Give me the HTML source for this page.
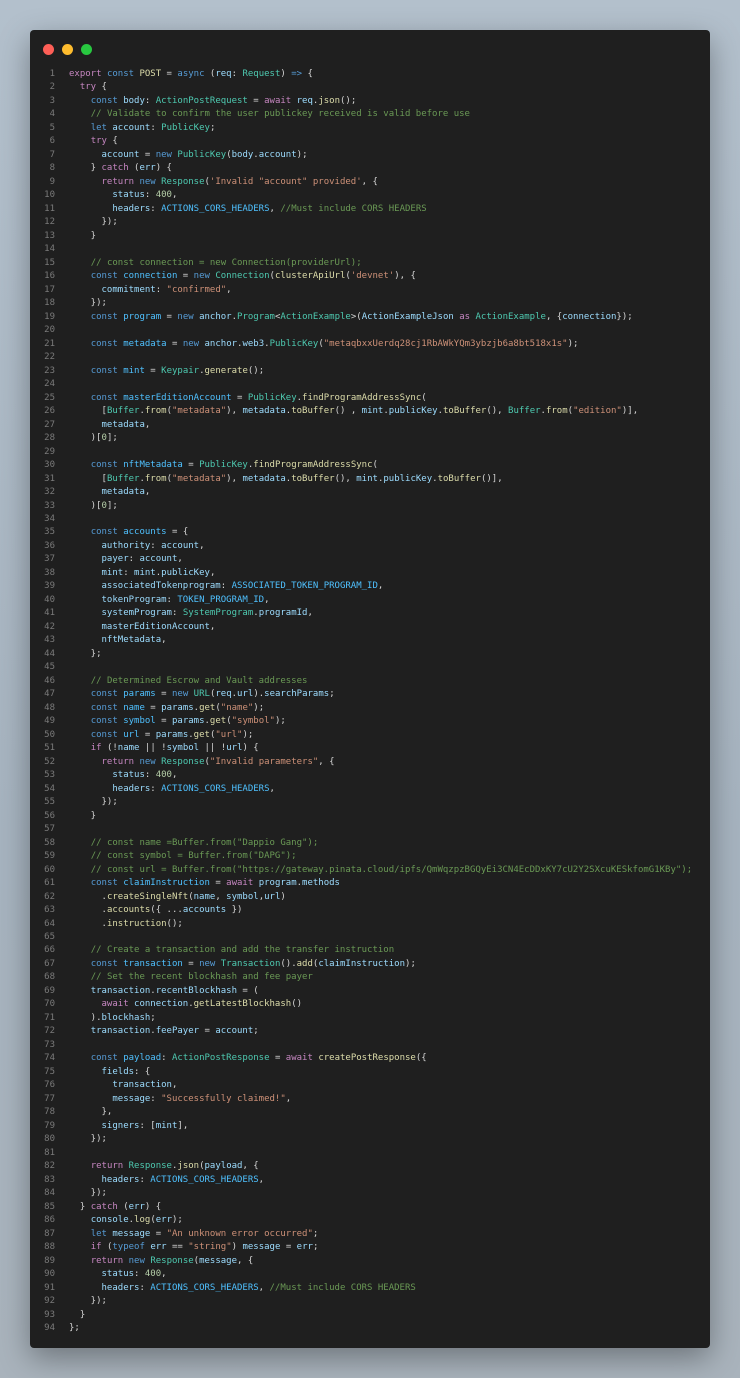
<!DOCTYPE html>
<html><head><meta charset="utf-8">
<style>
html,body{margin:0;padding:0;}
body{width:740px;height:1378px;background:linear-gradient(180deg,#b3c0cc 0%,#a6b3bf 60%,#a9b3bc 100%);position:relative;overflow:hidden;font-family:"Liberation Mono",monospace;}
.win{position:absolute;left:30px;top:30px;width:680px;height:1318px;background:#1f1f1f;border-radius:4px;box-shadow:0 10px 30px rgba(0,0,0,0.35);}
.dot{position:absolute;top:44px;width:11px;height:11px;border-radius:50%;}
.code{position:absolute;left:0;top:68px;font-size:9px;line-height:13.48px;color:#d4d4d4;white-space:pre;margin:0;}
.ln{display:inline-block;width:55px;text-align:right;color:#7a7a7a;margin-right:14px;}
.k{color:#c586c0}.b{color:#569cd6}.f{color:#dcdcaa}.t{color:#4ec9b0}.v{color:#9cdcfe}.s{color:#ce9178}.c{color:#6a9955}.n{color:#b5cea8}.u{color:#4fc1ff}
</style></head><body>
<div class="win"></div>
<div class="dot" style="left:43px;background:#fe5f57"></div>
<div class="dot" style="left:62px;background:#febc2e"></div>
<div class="dot" style="left:81px;background:#28c840"></div>
<pre class="code"><span class="ln">1</span><span class="k">export</span> <span class="b">const</span> <span class="f">POST</span> = <span class="b">async</span> (<span class="v">req</span>: <span class="t">Request</span>) <span class="b">=&gt;</span> {
<span class="ln">2</span>  <span class="k">try</span> {
<span class="ln">3</span>    <span class="b">const</span> <span class="v">body</span>: <span class="t">ActionPostRequest</span> = <span class="k">await</span> <span class="v">req</span>.<span class="f">json</span>();
<span class="ln">4</span>    <span class="c">// Validate to confirm the user publickey received is valid before use</span>
<span class="ln">5</span>    <span class="b">let</span> <span class="v">account</span>: <span class="t">PublicKey</span>;
<span class="ln">6</span>    <span class="k">try</span> {
<span class="ln">7</span>      <span class="v">account</span> = <span class="b">new</span> <span class="t">PublicKey</span>(<span class="v">body</span>.<span class="v">account</span>);
<span class="ln">8</span>    } <span class="k">catch</span> (<span class="v">err</span>) {
<span class="ln">9</span>      <span class="k">return</span> <span class="b">new</span> <span class="t">Response</span>(<span class="s">'Invalid "account" provided'</span>, {
<span class="ln">10</span>        <span class="v">status</span>: <span class="n">400</span>,
<span class="ln">11</span>        <span class="v">headers</span>: <span class="u">ACTIONS_CORS_HEADERS</span>, <span class="c">//Must include CORS HEADERS</span>
<span class="ln">12</span>      });
<span class="ln">13</span>    }
<span class="ln">14</span>
<span class="ln">15</span>    <span class="c">// const connection = new Connection(providerUrl);</span>
<span class="ln">16</span>    <span class="b">const</span> <span class="u">connection</span> = <span class="b">new</span> <span class="t">Connection</span>(<span class="f">clusterApiUrl</span>(<span class="s">'devnet'</span>), {
<span class="ln">17</span>      <span class="v">commitment</span>: <span class="s">"confirmed"</span>,
<span class="ln">18</span>    });
<span class="ln">19</span>    <span class="b">const</span> <span class="u">program</span> = <span class="b">new</span> <span class="v">anchor</span>.<span class="t">Program</span>&lt;<span class="t">ActionExample</span>&gt;(<span class="v">ActionExampleJson</span> <span class="k">as</span> <span class="t">ActionExample</span>, {<span class="v">connection</span>});
<span class="ln">20</span>
<span class="ln">21</span>    <span class="b">const</span> <span class="u">metadata</span> = <span class="b">new</span> <span class="v">anchor</span>.<span class="v">web3</span>.<span class="t">PublicKey</span>(<span class="s">"metaqbxxUerdq28cj1RbAWkYQm3ybzjb6a8bt518x1s"</span>);
<span class="ln">22</span>
<span class="ln">23</span>    <span class="b">const</span> <span class="u">mint</span> = <span class="t">Keypair</span>.<span class="f">generate</span>();
<span class="ln">24</span>
<span class="ln">25</span>    <span class="b">const</span> <span class="u">masterEditionAccount</span> = <span class="t">PublicKey</span>.<span class="f">findProgramAddressSync</span>(
<span class="ln">26</span>      [<span class="t">Buffer</span>.<span class="f">from</span>(<span class="s">"metadata"</span>), <span class="v">metadata</span>.<span class="f">toBuffer</span>() , <span class="v">mint</span>.<span class="v">publicKey</span>.<span class="f">toBuffer</span>(), <span class="t">Buffer</span>.<span class="f">from</span>(<span class="s">"edition"</span>)],
<span class="ln">27</span>      <span class="v">metadata</span>,
<span class="ln">28</span>    )[<span class="n">0</span>];
<span class="ln">29</span>
<span class="ln">30</span>    <span class="b">const</span> <span class="u">nftMetadata</span> = <span class="t">PublicKey</span>.<span class="f">findProgramAddressSync</span>(
<span class="ln">31</span>      [<span class="t">Buffer</span>.<span class="f">from</span>(<span class="s">"metadata"</span>), <span class="v">metadata</span>.<span class="f">toBuffer</span>(), <span class="v">mint</span>.<span class="v">publicKey</span>.<span class="f">toBuffer</span>()],
<span class="ln">32</span>      <span class="v">metadata</span>,
<span class="ln">33</span>    )[<span class="n">0</span>];
<span class="ln">34</span>
<span class="ln">35</span>    <span class="b">const</span> <span class="u">accounts</span> = {
<span class="ln">36</span>      <span class="v">authority</span>: <span class="v">account</span>,
<span class="ln">37</span>      <span class="v">payer</span>: <span class="v">account</span>,
<span class="ln">38</span>      <span class="v">mint</span>: <span class="v">mint</span>.<span class="v">publicKey</span>,
<span class="ln">39</span>      <span class="v">associatedTokenprogram</span>: <span class="u">ASSOCIATED_TOKEN_PROGRAM_ID</span>,
<span class="ln">40</span>      <span class="v">tokenProgram</span>: <span class="u">TOKEN_PROGRAM_ID</span>,
<span class="ln">41</span>      <span class="v">systemProgram</span>: <span class="t">SystemProgram</span>.<span class="v">programId</span>,
<span class="ln">42</span>      <span class="v">masterEditionAccount</span>,
<span class="ln">43</span>      <span class="v">nftMetadata</span>,
<span class="ln">44</span>    };
<span class="ln">45</span>
<span class="ln">46</span>    <span class="c">// Determined Escrow and Vault addresses</span>
<span class="ln">47</span>    <span class="b">const</span> <span class="u">params</span> = <span class="b">new</span> <span class="t">URL</span>(<span class="v">req</span>.<span class="v">url</span>).<span class="v">searchParams</span>;
<span class="ln">48</span>    <span class="b">const</span> <span class="u">name</span> = <span class="v">params</span>.<span class="f">get</span>(<span class="s">"name"</span>);
<span class="ln">49</span>    <span class="b">const</span> <span class="u">symbol</span> = <span class="v">params</span>.<span class="f">get</span>(<span class="s">"symbol"</span>);
<span class="ln">50</span>    <span class="b">const</span> <span class="u">url</span> = <span class="v">params</span>.<span class="f">get</span>(<span class="s">"url"</span>);
<span class="ln">51</span>    <span class="k">if</span> (!<span class="v">name</span> || !<span class="v">symbol</span> || !<span class="v">url</span>) {
<span class="ln">52</span>      <span class="k">return</span> <span class="b">new</span> <span class="t">Response</span>(<span class="s">"Invalid parameters"</span>, {
<span class="ln">53</span>        <span class="v">status</span>: <span class="n">400</span>,
<span class="ln">54</span>        <span class="v">headers</span>: <span class="u">ACTIONS_CORS_HEADERS</span>,
<span class="ln">55</span>      });
<span class="ln">56</span>    }
<span class="ln">57</span>
<span class="ln">58</span>    <span class="c">// const name =Buffer.from("Dappio Gang");</span>
<span class="ln">59</span>    <span class="c">// const symbol = Buffer.from("DAPG");</span>
<span class="ln">60</span>    <span class="c">// const url = Buffer.from("https://gateway.pinata.cloud/ipfs/QmWqzpzBGQyEi3CN4EcDDxKY7cU2Y2SXcuKESkfomG1KBy");</span>
<span class="ln">61</span>    <span class="b">const</span> <span class="u">claimInstruction</span> = <span class="k">await</span> <span class="v">program</span>.<span class="v">methods</span>
<span class="ln">62</span>      .<span class="f">createSingleNft</span>(<span class="v">name</span>, <span class="v">symbol</span>,<span class="v">url</span>)
<span class="ln">63</span>      .<span class="f">accounts</span>({ ...<span class="v">accounts</span> })
<span class="ln">64</span>      .<span class="f">instruction</span>();
<span class="ln">65</span>
<span class="ln">66</span>    <span class="c">// Create a transaction and add the transfer instruction</span>
<span class="ln">67</span>    <span class="b">const</span> <span class="u">transaction</span> = <span class="b">new</span> <span class="t">Transaction</span>().<span class="f">add</span>(<span class="v">claimInstruction</span>);
<span class="ln">68</span>    <span class="c">// Set the recent blockhash and fee payer</span>
<span class="ln">69</span>    <span class="v">transaction</span>.<span class="v">recentBlockhash</span> = (
<span class="ln">70</span>      <span class="k">await</span> <span class="v">connection</span>.<span class="f">getLatestBlockhash</span>()
<span class="ln">71</span>    ).<span class="v">blockhash</span>;
<span class="ln">72</span>    <span class="v">transaction</span>.<span class="v">feePayer</span> = <span class="v">account</span>;
<span class="ln">73</span>
<span class="ln">74</span>    <span class="b">const</span> <span class="u">payload</span>: <span class="t">ActionPostResponse</span> = <span class="k">await</span> <span class="f">createPostResponse</span>({
<span class="ln">75</span>      <span class="v">fields</span>: {
<span class="ln">76</span>        <span class="v">transaction</span>,
<span class="ln">77</span>        <span class="v">message</span>: <span class="s">"Successfully claimed!"</span>,
<span class="ln">78</span>      },
<span class="ln">79</span>      <span class="v">signers</span>: [<span class="v">mint</span>],
<span class="ln">80</span>    });
<span class="ln">81</span>
<span class="ln">82</span>    <span class="k">return</span> <span class="t">Response</span>.<span class="f">json</span>(<span class="v">payload</span>, {
<span class="ln">83</span>      <span class="v">headers</span>: <span class="u">ACTIONS_CORS_HEADERS</span>,
<span class="ln">84</span>    });
<span class="ln">85</span>  } <span class="k">catch</span> (<span class="v">err</span>) {
<span class="ln">86</span>    <span class="v">console</span>.<span class="f">log</span>(<span class="v">err</span>);
<span class="ln">87</span>    <span class="b">let</span> <span class="v">message</span> = <span class="s">"An unknown error occurred"</span>;
<span class="ln">88</span>    <span class="k">if</span> (<span class="b">typeof</span> <span class="v">err</span> == <span class="s">"string"</span>) <span class="v">message</span> = <span class="v">err</span>;
<span class="ln">89</span>    <span class="k">return</span> <span class="b">new</span> <span class="t">Response</span>(<span class="v">message</span>, {
<span class="ln">90</span>      <span class="v">status</span>: <span class="n">400</span>,
<span class="ln">91</span>      <span class="v">headers</span>: <span class="u">ACTIONS_CORS_HEADERS</span>, <span class="c">//Must include CORS HEADERS</span>
<span class="ln">92</span>    });
<span class="ln">93</span>  }
<span class="ln">94</span>};</pre>
</body></html>
